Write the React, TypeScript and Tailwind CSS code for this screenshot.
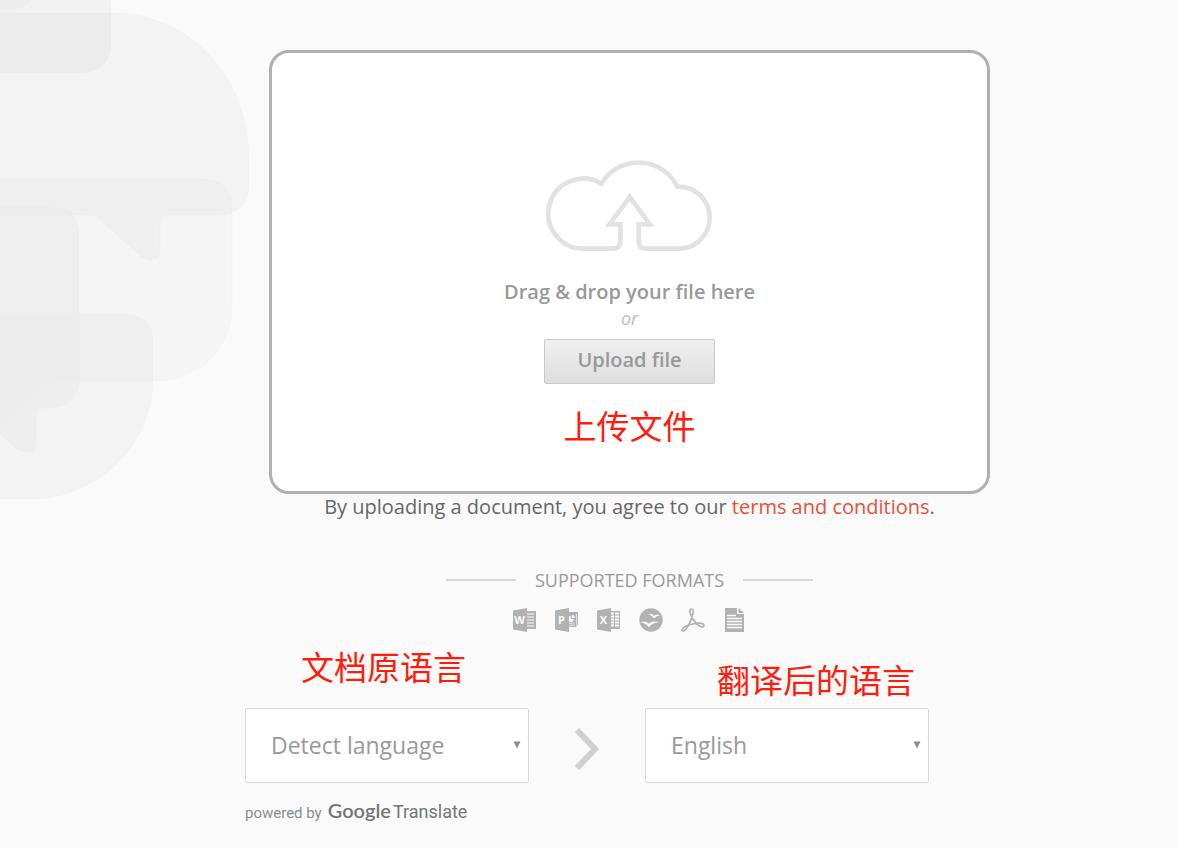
import React, { useState } from 'react';

function BackgroundBubbles() {
  return (
    <svg
      className="absolute left-0 top-0 pointer-events-none"
      width="252"
      height="502"
      viewBox="-1 0 252 502"
      stroke="#000"
      strokeOpacity="0.008"
      strokeWidth="2"
      aria-hidden="true"
    >
      <path d="M-4 -4H34Q24 9 10 9H-4Z" fill="#c0c0c0" fillOpacity="0.1" />
      <path d="M-4 -4H110V41Q110 73 78 73H-4Z" fill="#c0c0c0" fillOpacity="0.12" />
      <path
        d="M-4 13H111C190 13 248 78 248 158V184Q248 215 216 215H167Q159 215 159 223V250Q159 260 149 260Q145 260 141 257L96 217Q94 215 91 215H-4Z"
        fill="#c0c0c0"
        fillOpacity="0.11"
      />
      <path
        d="M-4 179H199Q231 179 231 211V306C231 350 196 381 155 381H50L-4 427Z"
        fill="#c0c0c0"
        fillOpacity="0.08"
      />
      <path
        d="M-4 314H123Q152 314 152 343V378C152 446 96 499 30 499H-4Z"
        fill="#c0c0c0"
        fillOpacity="0.11"
      />
      <path
        d="M-4 206H47Q78 206 78 238V377Q78 408 46 408H42Q35 408 35 415V442Q35 452 25 452Q19 452 15 448L-4 431Z"
        fill="#ececec"
        fillOpacity="0.75"
      />
    </svg>
  );
}

function CloudUploadIcon() {
  return (
    <svg width="168" height="92" viewBox="48 30 504 276" fill="none" stroke="#e2e2e2" strokeWidth="14" aria-hidden="true">
      <path d="M299 141L360 223H326V272Q326 296 350 296H450A93 93 0 0 0 442 110A130 130 0 0 0 214 101A105 105 0 1 0 160 296H248Q271 296 271 272V223H238Z" />
    </svg>
  );
}

// Folded cover used by the three Office formats
function OfficeCover({ letter }: { letter: string }) {
  return (
    <>
      <path d="M0 2.5L14 0V24L0 21.5Z" />
      <text
        x="6.5"
        y="16"
        textAnchor="middle"
        fill="#fafafa"
        className="font-['Open_Sans',sans-serif] text-[11px] font-bold"
      >
        {letter}
      </text>
    </>
  );
}

function WordIcon() {
  return (
    <svg width="24" height="24" viewBox="0 0 24 24" fill="#b2b2b2" role="img" aria-label="Word">
      <path d="M14 3H23V21H14Z" />
      <path d="M14 6H21M14 9H21M14 12H21M14 15H21M14 18H21" stroke="#fafafa" strokeWidth="1.2" />
      <OfficeCover letter="W" />
    </svg>
  );
}

function PowerPointIcon() {
  return (
    <svg width="24" height="24" viewBox="0 0 24 24" fill="#b2b2b2" role="img" aria-label="PowerPoint">
      <path d="M14 4H23V17H21.6V19H14Z" />
      <path d="M21.5 6V17.5" stroke="#fafafa" strokeWidth="0.7" />
      <path d="M15.8 8A3 3 0 1 0 18.8 11H15.8Z" fill="#fafafa" />
      <path d="M16.8 7A3 3 0 0 1 19.8 10H16.8Z" fill="#fafafa" />
      <path d="M14 15.2H19.5M14 17.2H19.5" stroke="#fafafa" strokeWidth="0.8" />
      <OfficeCover letter="P" />
    </svg>
  );
}

function ExcelIcon() {
  return (
    <svg width="24" height="24" viewBox="0 0 24 24" fill="#b2b2b2" role="img" aria-label="Excel">
      <path d="M14 3H23V21H14Z" />
      <path
        d="M14 5.5H17M18 5.5H22M14 8.5H17M18 8.5H22M14 11.5H17M18 11.5H22M14 14.5H17M18 14.5H22M14 17.5H17M18 17.5H22"
        stroke="#fafafa"
        strokeWidth="2"
      />
      <OfficeCover letter="X" />
    </svg>
  );
}

function OpenOfficeIcon() {
  return (
    <svg width="24" height="24" viewBox="0 0 24 24" fill="#b2b2b2" role="img" aria-label="OpenOffice">
      <circle cx="12" cy="12" r="11.7" />
      <path
        d="M9.5 6.3Q13.2 5.3 15 7.7Q17 6 21.5 7Q17 7.9 15.2 10.6Q12.8 7.6 9.5 6.3ZM1 14Q6.5 12.3 9.8 15.6Q13 12.4 20 14Q13 15 10 19.2Q6.5 15 1 14Z"
        fill="#fafafa"
      />
    </svg>
  );
}

function PdfIcon() {
  return (
    <svg width="24" height="24" viewBox="0 0 24 24" fill="none" stroke="#b2b2b2" strokeWidth="1.7" role="img" aria-label="PDF">
      <path d="M10.6 1C8.6 1 8.4 3.2 9.4 6C11.4 11.3 16.3 18 20.8 18.8C23.4 19.2 23.8 16.6 21.3 15.6C17.5 14.2 8.3 16.3 3.6 18.8C0.8 20.3 0.4 23 2.2 23C5.2 23 9.9 13.5 11.6 7C12.6 3.2 12.5 1 10.6 1Z" />
    </svg>
  );
}

function TextFileIcon() {
  return (
    <svg width="24" height="24" viewBox="0 0 24 24" fill="#b2b2b2" role="img" aria-label="Text">
      <path d="M2 0H14V6H21V24H2ZM15.5 0L21 5H15.5Z" />
      <path d="M4 7.5H13M4 10.5H19M4 13.5H19M4 16.5H19M4 19.5H19" stroke="#fafafa" strokeWidth="1.4" />
    </svg>
  );
}

interface LanguageSelectProps {
  id: string;
  value: string;
  options: string[];
  onChange: (value: string) => void;
}

function LanguageSelect({ id, value, options, onChange }: LanguageSelectProps) {
  return (
    <div className="relative">
      <select
        id={id}
        value={value}
        onChange={(e) => onChange(e.target.value)}
        className="block w-full h-[75px] appearance-none rounded-xs border border-[#d9d9d9] bg-white pl-[25px] pr-8 text-[23px] text-[#999]"
      >
        {options.map((option) => (
          <option key={option}>{option}</option>
        ))}
      </select>
      <svg
        className="absolute right-2 top-[33px] pointer-events-none"
        width="8"
        height="8"
        viewBox="0 0 8 8"
        fill="#8c8c8c"
        aria-hidden="true"
      >
        <path d="M0.5 0.5H7.5L4 7.5Z" />
      </svg>
    </div>
  );
}

const noteClass = "font-['Noto_Sans_CJK_SC',sans-serif] text-[33px] leading-10 text-[#ff1c0c] whitespace-nowrap";

export default function App() {
  const [source, setSource] = useState('Detect language');
  const [target, setTarget] = useState('English');

  return (
    <div className="relative min-h-screen bg-[#fafafa] font-['Open_Sans',sans-serif]">
      <BackgroundBubbles />

      <main className="relative pl-[81px] pt-[50px]">
        <div className="mx-auto max-w-[769px]">
          <section className="mx-6 flex flex-col items-center rounded-[20px] border-3 border-[#b0b0b0] bg-white pt-[107px] pb-[46px] text-[#999]">
            <CloudUploadIcon />
            <p className="mt-6 text-xl leading-8 font-semibold">Drag &amp; drop your file here</p>
            <p className="text-lg leading-5 italic text-[#bbb]">or</p>
            <button
              type="button"
              className="mt-[11px] h-[45px] w-[171px] rounded-xs border border-[#c8c8c8] bg-linear-to-b from-[#f0f0f0] to-[#dedede] pb-1 text-xl font-semibold"
            >
              Upload file
            </button>
            <p className={`mt-[21px] ${noteClass}`}>上传文件</p>
          </section>

          <p className="text-center text-xl leading-[26px] text-[#666]">
            By uploading a document, you agree to our{' '}
            <a href="#terms" className="text-[#e8503a]">terms and conditions</a>.
          </p>

          <div className="mt-12 flex items-center justify-center gap-[19px]">
            <span className="h-0.5 w-[70px] bg-[#d8d8d8]" />
            <h2 className="text-lg leading-6 text-[#999]">SUPPORTED FORMATS</h2>
            <span className="h-0.5 w-[70px] bg-[#d8d8d8]" />
          </div>

          <div className="mt-4 flex justify-center gap-[18px]">
            <WordIcon />
            <PowerPointIcon />
            <ExcelIcon />
            <OpenOfficeIcon />
            <PdfIcon />
            <TextFileIcon />
          </div>

          <div className="mt-3.5 flex items-end pr-[85px]">
            <div className="flex-1">
              <label htmlFor="source" className={`mb-[22px] ml-14 block ${noteClass}`}>文档原语言</label>
              <LanguageSelect
                id="source"
                value={source}
                options={['Detect language', 'English', 'Chinese', 'French', 'German', 'Spanish']}
                onChange={setSource}
              />
            </div>
            <svg
              className="mx-[45px] mb-3"
              width="26"
              height="44"
              viewBox="0 0 26 44"
              fill="none"
              stroke="#d0d0d0"
              strokeWidth="6"
              aria-hidden="true"
            >
              <path d="M3 3L21 22L3 41" />
            </svg>
            <div className="flex-1">
              <label htmlFor="target" className={`mb-[9px] ml-[72px] block ${noteClass}`}>翻译后的语言</label>
              <LanguageSelect
                id="target"
                value={target}
                options={['English', 'Chinese', 'French', 'German', 'Spanish']}
                onChange={setTarget}
              />
            </div>
          </div>

          <div className="mt-[13px] flex items-baseline font-['Roboto',sans-serif] text-[#757575]">
            <span className="mr-1.5 text-[15px] text-[#8c8c8c]">powered by</span>
            <span className="mr-0.5 font-['Lato',sans-serif] text-xl font-semibold">Google</span>
            <span className="text-lg">Translate</span>
          </div>
        </div>
      </main>
    </div>
  );
}
